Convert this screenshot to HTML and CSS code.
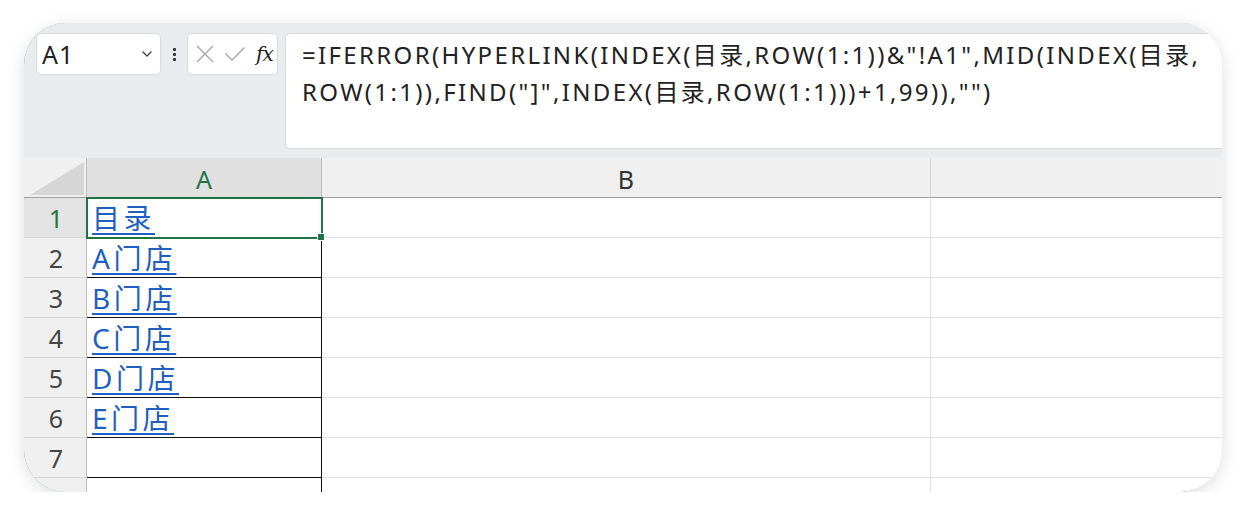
FILE: index.html
```html
<!DOCTYPE html>
<html lang="zh-CN">
<head>
<meta charset="utf-8">
<title>Excel</title>
<link rel="stylesheet" href="styles.css">
</head>
<body>
<div class="card">
  <div class="fbar">
    <div class="namebox">
      <span class="name">A1</span>
      <svg class="chev" width="12" height="8" viewBox="0 0 12 8"><path d="M1.5 1.5 L6 6 L10.5 1.5" fill="none" stroke="#444" stroke-width="1.3"/></svg>
    </div>
    <div class="dots"><span></span><span></span><span></span></div>
    <div class="btns">
      <svg width="20" height="20" viewBox="0 0 20 20"><path d="M2 2 L18 18 M18 2 L2 18" stroke="#a6a6a6" stroke-width="1.4" fill="none"/></svg>
      <svg width="22" height="18" viewBox="0 0 22 18"><path d="M1.5 8.5 L8 15 L20.5 2.5" stroke="#a6a6a6" stroke-width="1.4" fill="none"/></svg>
      <span class="fx">fx</span>
    </div>
    <div class="formula">=IFERROR(HYPERLINK(INDEX(目录,ROW(1:1))&amp;"!A1",MID(INDEX(目录,<br>ROW(1:1)),FIND("]",INDEX(目录,ROW(1:1)))+1,99)),"")</div>
  </div>
  <div class="grid">
    <div class="corner"><span class="tri"></span></div>
    <div class="ch sel">A</div>
    <div class="ch">B</div>
    <div class="ch last"></div>

    <div class="rh sel">1</div>
    <div class="c a a1"><span class="lnk">目录</span></div>
    <div class="c"></div>
    <div class="c last"></div>

    <div class="rh">2</div>
    <div class="c a"><span class="lnk">A门店</span></div>
    <div class="c"></div>
    <div class="c last"></div>

    <div class="rh">3</div>
    <div class="c a"><span class="lnk">B门店</span></div>
    <div class="c"></div>
    <div class="c last"></div>

    <div class="rh">4</div>
    <div class="c a"><span class="lnk">C门店</span></div>
    <div class="c"></div>
    <div class="c last"></div>

    <div class="rh">5</div>
    <div class="c a"><span class="lnk">D门店</span></div>
    <div class="c"></div>
    <div class="c last"></div>

    <div class="rh">6</div>
    <div class="c a"><span class="lnk">E门店</span></div>
    <div class="c"></div>
    <div class="c last"></div>

    <div class="rh">7</div>
    <div class="c a"></div>
    <div class="c"></div>
    <div class="c last"></div>

    <div class="rh"></div>
    <div class="c a"></div>
    <div class="c"></div>
    <div class="c last"></div>
  </div>
</div>
</body>
</html>
```
FILE: styles.css
```css
* { box-sizing: border-box; }
html, body { margin: 0; padding: 0; background: #ffffff; }
body {
  font-family: "Noto Sans", "Noto Sans CJK SC", sans-serif;
  color: #222;
  padding: 23px 22px 0 24px;
}
.card {
  width: 1198px;
  height: 469px;
  border-radius: 42px;
  overflow: hidden;
  background: #fff;
  box-shadow: 0 4px 18px rgba(0,0,0,0.13), inset 1px 0 0 #4a9468;
  display: flex;
  flex-direction: column;
}
.fbar {
  background: #e9ecef;
  height: 135px;
  flex: none;
  display: flex;
  align-items: flex-start;
  padding: 10px 0 0 12px;
}
.namebox {
  width: 125px;
  height: 42px;
  background: #fff;
  border: 1px solid #d8dadd;
  border-radius: 5px;
  display: flex;
  align-items: center;
  justify-content: space-between;
  padding: 0 7px 0 5px;
}
.name { font-size: 25px; color: #222; letter-spacing: 1px; }
.dots {
  width: 26px;
  height: 42px;
  display: flex;
  flex-direction: column;
  align-items: center;
  justify-content: center;
  gap: 2px;
}
.dots span { width: 3px; height: 3px; background: #333; border-radius: 1px; }
.btns {
  width: 91px;
  height: 42px;
  background: #fff;
  border: 1px solid #d8dadd;
  border-radius: 5px;
  display: flex;
  align-items: center;
  gap: 9px;
  padding-left: 7px;
}
.fx {
  font-family: "DejaVu Serif", "Liberation Serif", serif;
  font-style: italic;
  font-size: 20px;
  color: #222;
  letter-spacing: -1px;
  margin-left: 1px;
}
.formula {
  flex: 1;
  margin-left: 7px;
  height: 116px;
  background: #fff;
  border: 1px solid #d8dadd;
  border-right: none;
  border-radius: 5px 0 0 5px;
  padding: 2px 0 0 16px;
  font-size: 24px;
  letter-spacing: 2.35px;
  line-height: 37px;
  color: #222;
  white-space: nowrap;
}
.grid {
  flex: 1;
  display: grid;
  grid-template-columns: 63px 235px 609px 1fr;
  grid-template-rows: 40px repeat(8, 40px);
  overflow: hidden;
}
.corner {
  background: #f0f0f0;
  border-right: 1px solid #bdbdbd;
  border-bottom: 1px solid #a0a0a0;
  display: flex;
  align-items: flex-end;
  justify-content: flex-end;
  padding: 0 2px 2px 0;
}
.tri {
  width: 54px;
  height: 33px;
  background: #d6d6d6;
  clip-path: polygon(100% 0, 100% 100%, 0 100%);
}
.ch {
  background: #f0f0f0;
  border-right: 1px solid #d4d4d4;
  border-bottom: 1px solid #a0a0a0;
  display: flex;
  align-items: center;
  justify-content: center;
  font-size: 25px;
  color: #333;
  padding-top: 2px;
}
.ch.sel { background: #e0e0e0; color: #217346; border-right-color: #bdbdbd; }
.ch.last { border-right: none; }
.rh {
  background: #f0f0f0;
  border-right: 1px solid #bdbdbd;
  border-bottom: 1px solid #d8d8d8;
  display: flex;
  align-items: center;
  justify-content: center;
  font-size: 25px;
  color: #444;
  padding-left: 2px;
}
.rh.sel { background: #e3e3e3; color: #217346; }
.c {
  border-right: 1px solid #e1e1e1;
  border-bottom: 1px solid #e1e1e1;
  display: flex;
  align-items: center;
}
.c.last { border-right: none; }
.c.a { border-right: 1px solid #111; border-bottom: 1px solid #111; padding-left: 5px; }
.a1 {
  position: relative;
  border-right-color: transparent !important;
  border-bottom-color: transparent !important;
  outline: 2px solid #217346;
  outline-offset: -1px;
  z-index: 1;
}
.a1::after {
  content: "";
  position: absolute;
  right: -4px;
  bottom: -4px;
  width: 6px;
  height: 6px;
  background: #217346;
  border: 1px solid #fff;
}
.lnk {
  font-size: 28px;
  letter-spacing: 3.5px;
  color: #1f5fbf;
  text-decoration: underline;
  text-decoration-thickness: 1.5px;
  text-underline-offset: 4px;
  line-height: 1;
}
```
